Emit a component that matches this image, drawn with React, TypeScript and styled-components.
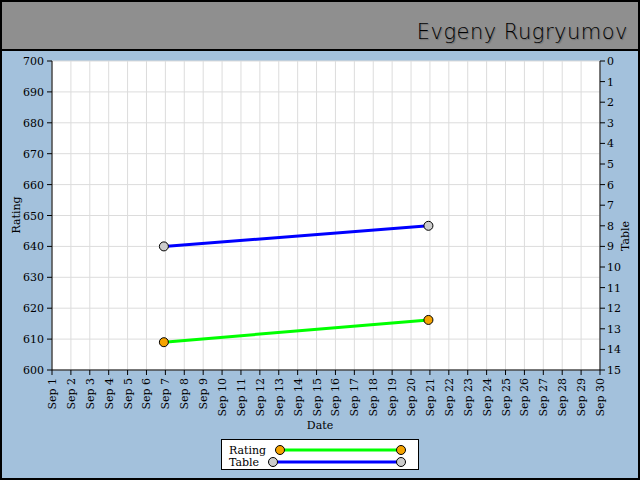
import React from 'react';
import styled, { createGlobalStyle } from 'styled-components';

const GlobalStyle = createGlobalStyle`
  html, body { margin: 0; padding: 0; background: #a3c1dc; }
`;

const Frame = styled.div`
  width: 640px;
  height: 480px;
  box-sizing: border-box;
  border: 2px solid #000;
  background: #a3c1dc;
  display: flex;
  flex-direction: column;
  overflow: hidden;
`;

const Header = styled.div`
  height: 49px;
  flex: none;
  background: #8f8f8f;
  border-bottom: 2px solid #000;
  display: flex;
  align-items: flex-end;
  justify-content: flex-end;
  padding: 0 10px 5px 0;
  box-sizing: border-box;
`;

const Name = styled.span`
  font-family: 'DejaVu Sans', sans-serif;
  font-weight: 300;
  font-size: 21px;
  letter-spacing: 0.5px;
  color: #000;
  text-shadow: 1px 1px 1px rgba(0, 0, 0, 0.25);
`;

const ChartSvg = styled.svg`
  display: block;
  font-family: 'DejaVu Serif', serif;
  font-size: 11px;
`;

const X0 = 52;
const X1 = 600;
const Y0 = 61;
const Y1 = 370;
const dayX = (d: number) => X0 + ((d - 1) * (X1 - X0)) / 29;
const ratingY = (r: number) => Y1 - ((r - 600) * (Y1 - Y0)) / 100;
const tableY = (t: number) => Y0 + (t * (Y1 - Y0)) / 15;
// data points sit a touch left of the tick in the original
const ptX = (d: number) => dayX(d) - 1.5;

const days = Array.from({ length: 30 }, (_, i) => i + 1);
const ratings = Array.from({ length: 11 }, (_, i) => 600 + i * 10);
const tables = Array.from({ length: 16 }, (_, i) => i);

const Dot = ({ x, y, fill }: { x: number; y: number; fill: string }) => (
  <circle cx={x} cy={y} r={4.5} fill={fill} stroke="#000" strokeWidth={1} />
);

const Chart = () => (
  <ChartSvg width={636} height={427} viewBox="2 51 636 427">
    <rect x={X0} y={Y0} width={X1 - X0} height={Y1 - Y0} fill="#fff" />
    {days.map(d => (
      <line key={d} x1={dayX(d)} x2={dayX(d)} y1={Y0} y2={Y1} stroke="#dcdcdc" />
    ))}
    {ratings.map(r => (
      <line key={r} x1={X0} x2={X1} y1={ratingY(r)} y2={ratingY(r)} stroke="#dcdcdc" />
    ))}
    <line x1={X0} x2={X0} y1={Y0} y2={Y1} stroke="#000" />
    <line x1={X1} x2={X1} y1={Y0} y2={Y1} stroke="#000" />
    <line x1={X0} x2={X1} y1={Y1} y2={Y1} stroke="#000" />
    {ratings.map(r => (
      <g key={r}>
        <line x1={X0 - 5} x2={X0} y1={ratingY(r)} y2={ratingY(r)} stroke="#000" />
        <text x={X0 - 8} y={ratingY(r) + 4} textAnchor="end">{r}</text>
      </g>
    ))}
    {tables.map(t => (
      <g key={t}>
        <line x1={X1} x2={X1 + 5} y1={tableY(t)} y2={tableY(t)} stroke="#000" />
        <text x={X1 + 7} y={tableY(t) + 4}>{t}</text>
      </g>
    ))}
    {days.map(d => (
      <g key={d}>
        <line x1={dayX(d)} x2={dayX(d)} y1={Y1} y2={Y1 + 5} stroke="#000" />
        <text
          transform={`translate(${dayX(d) + 4}, ${Y1 + 8}) rotate(-90)`}
          textAnchor="end"
        >
          Sep {d}
        </text>
      </g>
    ))}
    <text transform="translate(20, 215) rotate(-90)" textAnchor="middle">Rating</text>
    <text transform="translate(629, 236) rotate(-90)" textAnchor="middle">Table</text>
    <text x={320} y={429} textAnchor="middle">Date</text>

    <line x1={ptX(7)} y1={ratingY(609)} x2={ptX(21)} y2={ratingY(616.2)} stroke="#00ff00" strokeWidth={3} />
    <line x1={ptX(7)} y1={tableY(9)} x2={ptX(21)} y2={tableY(8)} stroke="#0000ff" strokeWidth={3} />
    <Dot x={ptX(7)} y={ratingY(609)} fill="#f5a300" />
    <Dot x={ptX(21)} y={ratingY(616.2)} fill="#f5a300" />
    <Dot x={ptX(7)} y={tableY(9)} fill="#cccccc" />
    <Dot x={ptX(21)} y={tableY(8)} fill="#cccccc" />

    <rect x={221.5} y={439.5} width={197} height={30} fill="#fff" stroke="#000" />
    <text x={229} y={454}>Rating</text>
    <text x={229} y={466}>Table</text>
    <line x1={280} x2={401} y1={450} y2={450} stroke="#00ff00" strokeWidth={3} />
    <line x1={273} x2={401} y1={462} y2={462} stroke="#0000ff" strokeWidth={3} />
    <Dot x={280} y={450} fill="#f5a300" />
    <Dot x={401} y={450} fill="#f5a300" />
    <Dot x={273} y={462} fill="#cccccc" />
    <Dot x={401} y={462} fill="#cccccc" />
  </ChartSvg>
);

export default function App() {
  return (
    <>
      <GlobalStyle />
      <Frame>
        <Header>
          <Name>Evgeny Rugryumov</Name>
        </Header>
        <Chart />
      </Frame>
    </>
  );
}
